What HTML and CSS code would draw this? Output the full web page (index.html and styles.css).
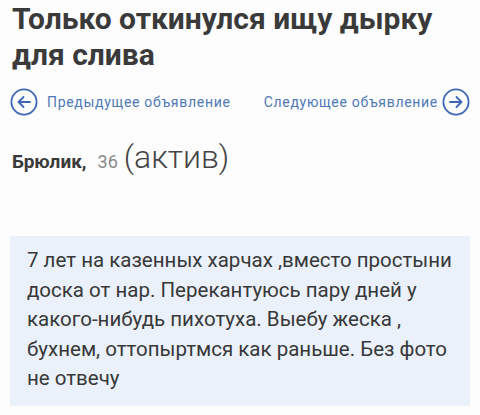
FILE: index.html
```html
<!DOCTYPE html>
<html lang="ru">
<head>
  <meta charset="UTF-8" />
  <meta name="viewport" content="width=device-width, initial-scale=1.0" />
  <title>Объявление</title>
  <link rel="stylesheet" href="styles.css">
</head>
<body>
  <div class="ad">
    <h1 class="ad-title">Только откинулся ищу дырку для слива</h1>

    <div class="ad-nav">
      <a class="nav-link nav-prev" href="#">
        <span class="nav-icon">
          <svg viewBox="0 0 28 28" width="28" height="28">
            <circle cx="14" cy="14" r="12.6" fill="none" stroke="currentColor" stroke-width="1.8"/>
            <path d="M20 14H8.5M13.5 9l-5 5 5 5" fill="none" stroke="currentColor" stroke-width="1.8" stroke-linecap="round" stroke-linejoin="round"/>
          </svg>
        </span>
        Предыдущее объявление
      </a>
      <a class="nav-link nav-next" href="#">
        Следующее объявление
        <span class="nav-icon">
          <svg viewBox="0 0 28 28" width="28" height="28">
            <circle cx="14" cy="14" r="12.6" fill="none" stroke="currentColor" stroke-width="1.8"/>
            <path d="M8 14h11.5M14.5 9l5 5-5 5" fill="none" stroke="currentColor" stroke-width="1.8" stroke-linecap="round" stroke-linejoin="round"/>
          </svg>
        </span>
      </a>
    </div>

    <div class="ad-author">
      <span class="author-name">Брюлик,</span>
      <span class="author-age">36</span>
      <span class="author-role">(актив)</span>
    </div>

    <div class="ad-text">
      7 лет на казенных харчах ,вместо простыни доска от нар. Перекантуюсь пару дней у какого-нибудь пихотуха. Выебу жеска , бухнем, оттопыртмся как раньше. Без фото не отвечу
    </div>
  </div>
</body>
</html>
```

FILE: styles.css
```css
* {
  box-sizing: border-box;
}

body {
  margin: 0;
  background: #fdfdfd;
  font-family: Roboto, 'Noto Sans', Arial, sans-serif;
  color: #333;
}

.ad {
  padding: 1px 10px 0 10px;
}

.ad-title {
  margin: 0 0 0 2px;
  font-size: 30px;
  line-height: 36px;
  font-weight: 700;
  color: #3a3a3a;
}

.ad-nav {
  display: flex;
  justify-content: space-between;
  align-items: center;
  margin-top: 15px;
}

.nav-link {
  display: flex;
  align-items: center;
  color: #4f79b5;
  font-size: 14px;
  letter-spacing: 0.7px;
  text-decoration: none;
}

.nav-prev {
  gap: 9px;
}

.nav-next {
  gap: 4px;
}

.nav-icon {
  display: flex;
  color: #3c68b4;
}

.ad-author {
  display: flex;
  align-items: baseline;
  margin: 22px 0 0 2px;
}

.author-name {
  font-size: 19px;
  font-weight: 700;
  color: #3a3a3a;
}

.author-age {
  margin-left: 11px;
  font-size: 18px;
  color: #8a8a8a;
}

.author-role {
  margin-left: 6px;
  font-size: 32px;
  font-weight: 300;
  color: #444;
}

.ad-text {
  margin-top: 60px;
  padding: 10px 17px 12px 17px;
  background: #eaf1fb;
  font-size: 20.5px;
  line-height: 29.5px;
  color: #383838;
}
```
